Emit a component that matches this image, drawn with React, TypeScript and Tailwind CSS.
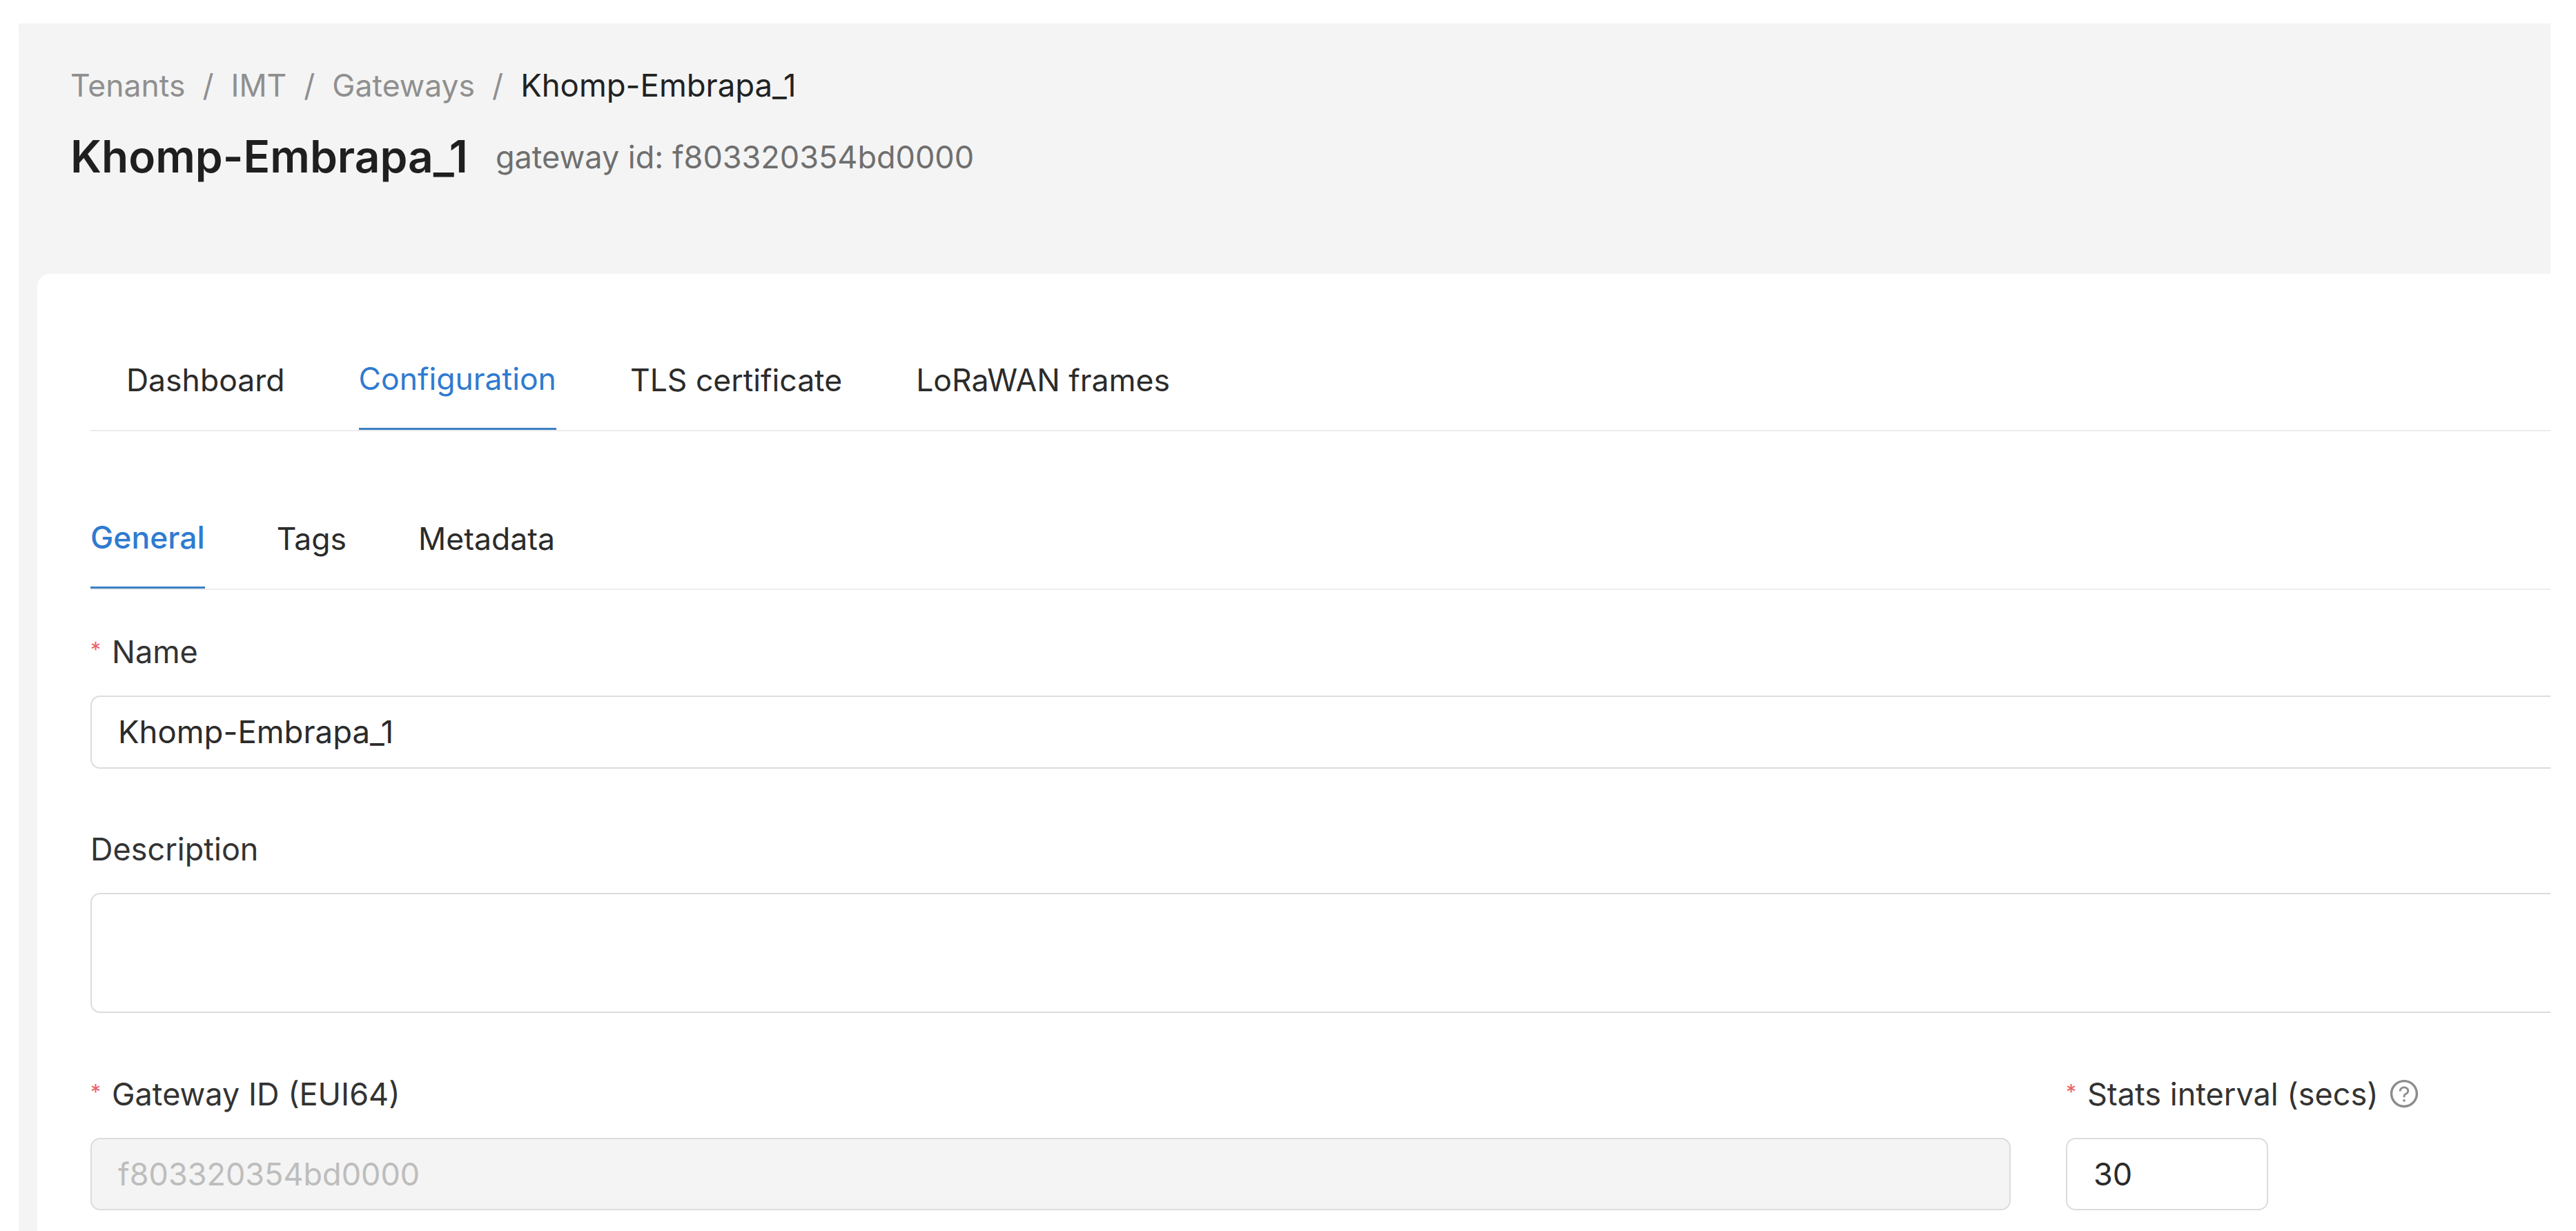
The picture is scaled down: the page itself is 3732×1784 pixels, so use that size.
import { AiOutlineQuestionCircle } from 'react-icons/ai'

const font = 'font-["Inter","Liberation_Sans",sans-serif]'

function TabBar({ tabs, active, className, activeWeight }: { tabs: string[]; active: string; className: string; activeWeight?: string }) {
	return (
		<div className={`flex border-b-2 border-[#ececec] text-[44.5px] ${className}`}>
			{tabs.map(tab => (
				<div
					key={tab}
					className={
						tab === active
							? `h-full -mb-[2px] pb-[4px] flex items-center border-b-[3px] border-[#3d80c4] text-[#2f7bd0] whitespace-nowrap ${activeWeight ?? ''}`
							: 'h-full pb-[4px] flex items-center text-[#2b2b2b] whitespace-nowrap'
					}
				>
					{tab}
				</div>
			))}
		</div>
	)
}

function FieldLabel({ text, required, children }: { text: string; required?: boolean; children?: React.ReactNode }) {
	return (
		<div className="flex items-center h-[80px] text-[#333] whitespace-nowrap">
			{required && <span className="w-[31px] -mt-[6px] text-[#e8626a] text-[30px]">*</span>}
			<span>{text}</span>
			{children}
		</div>
	)
}

export default function App() {
	return (
		<div className={`w-[3732px] h-[1784px] overflow-hidden bg-white pt-[34px] pl-[27px] pr-[37px] text-[45px] leading-none ${font}`}>
			<div className="h-full flex flex-col bg-[#f4f4f4] overflow-hidden">

				{/* Header */}
				<div className="h-[363px] shrink-0 pl-[75px] pt-[64px]">
					<div className="flex items-center h-[52px] gap-[25px] text-[44.5px] text-[#8f8f8f]">
						<span>Tenants</span>
						<span>/</span>
						<span>IMT</span>
						<span>/</span>
						<span>Gateways</span>
						<span>/</span>
						<span className="text-[45.5px] text-[#222]">Khomp-Embrapa_1</span>
					</div>
					<div className="flex items-center h-[70px] mt-[42px] gap-[40px]">
						<span className="font-semibold text-[64px] text-[#1f1f1f]">Khomp-Embrapa_1</span>
						<span className="text-[#6f6f6f]">gateway id: f803320354bd0000</span>
					</div>
				</div>

				{/* Card */}
				<div className="flex-1 ml-[27px] bg-white rounded-tl-[18px] pl-[77px] pt-[86px] overflow-hidden">
					<TabBar
						tabs={['Dashboard', 'Configuration', 'TLS certificate', 'LoRaWAN frames']}
						active="Configuration"
						className="h-[142px] pl-[52px] gap-[107px]"
					/>
					<TabBar
						tabs={['General', 'Tags', 'Metadata']}
						active="General"
						activeWeight="font-medium"
						className="h-[142px] mt-[88px] gap-[104px]"
					/>

					<div className="mt-[49px]">
						<FieldLabel text="Name" required />
						<div className="h-[106px] -mr-[20px] mt-[24px] flex items-center border-2 border-[#dcdcdc] rounded-[14px] pl-[38px] text-[45.5px] text-[#2b2b2b]">
							Khomp-Embrapa_1
						</div>

						<div className="mt-[76px]">
							<FieldLabel text="Description" />
						</div>
						<div className="h-[174px] -mr-[20px] mt-[24px] border-2 border-[#dcdcdc] rounded-[14px]" />

						<div className="mt-[77px] flex gap-[80px]">
							<div className="w-[2782px] shrink-0">
								<FieldLabel text="Gateway ID (EUI64)" required />
								<div className="h-[105px] mt-[24px] flex items-center border-2 border-[#dcdcdc] bg-[#f4f4f4] rounded-[14px] pl-[38px] text-[#bdbdbd]">
									f803320354bd0000
								</div>
							</div>
							<div>
								<FieldLabel text="Stats interval (secs)" required>
									<AiOutlineQuestionCircle className="ml-[14px] text-[#8c8c8c] text-[46px]" />
								</FieldLabel>
								<div className="w-[293px] h-[105px] mt-[24px] flex items-center border-2 border-[#dcdcdc] rounded-[14px] pl-[38px] text-[#2b2b2b]">
									30
								</div>
							</div>
						</div>
					</div>
				</div>
			</div>
		</div>
	)
}
